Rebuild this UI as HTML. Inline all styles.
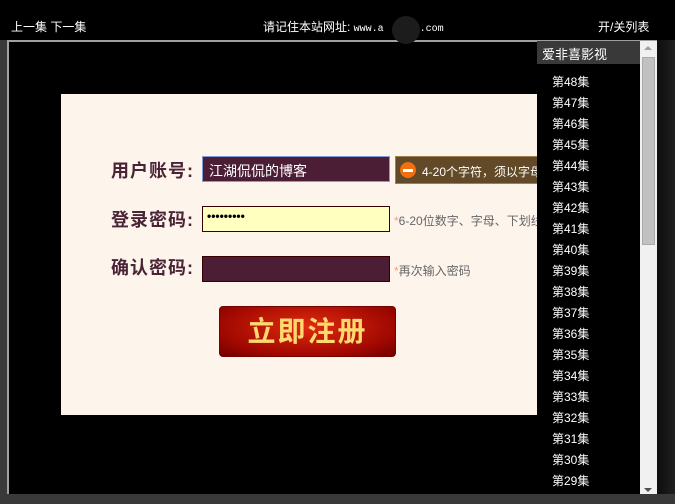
<!DOCTYPE html>
<html><head><meta charset="utf-8"><style>
*{margin:0;padding:0;box-sizing:border-box}
body{width:675px;height:504px;background:#393939;position:relative;overflow:hidden;font-family:"Liberation Sans","Noto Sans CJK SC",sans-serif;color:#fff}
.a{position:absolute}
.top{left:0;top:0;width:675px;height:40px;background:#000}
.rt{left:657px;top:40px;width:18px;height:454px;background:linear-gradient(90deg,#0e0e0e,#1f1f1f)}
.frame{left:7px;top:40px;width:650px;height:454px;border-left:2px solid #a0a0a0;border-top:2px solid #a0a0a0;background:#000}
.t{font-size:12px;top:18px;white-space:nowrap}
.panel{left:61px;top:94px;width:476px;height:321px;background:#fdf4ec}
.lab{font-size:18px;font-weight:bold;color:#4a2436;left:111px;letter-spacing:1px}
.inp{left:202px;width:188px;height:26px;background:#4c1e35;border:1px solid #3a0000}
.tip{font-size:12px;color:#666;left:394px}
.ep{left:552px;font-size:12px;color:#fff}
</style></head><body>
<div class="a top"></div>
<div class="a rt"></div>
<div class="a t" style="left:11px">上一集 下一集</div>
<div class="a t" style="left:263px">请记住本站网址: <span style="font-family:'Liberation Mono',monospace;font-size:10px">www.a&nbsp;&nbsp;&nbsp;&nbsp;&nbsp;i.com</span></div>
<div class="a" style="left:392px;top:16px;width:28px;height:28px;border-radius:50%;background:#1c1c1c;z-index:3"></div>
<div class="a t" style="left:598px">开/关列表</div>
<div class="a frame"></div>
<div class="a panel"></div>
<div class="a lab" style="top:157px">用户账号:</div>
<div class="a lab" style="top:206px">登录密码:</div>
<div class="a lab" style="top:254px">确认密码:</div>
<div class="a inp" style="top:156px;border-color:#7f9dd9;font-size:14px;padding:4px 6px;color:#fff">江湖侃侃的博客</div>
<div class="a inp" style="top:206px;background:#ffffc0;color:#000;font-size:12px;padding:2px 4px;font-weight:bold">•••••••••</div>
<div class="a inp" style="top:256px"></div>
<div class="a" style="left:395px;top:156px;width:142px;height:28px;background:#624a28;border:1px solid #a08050;border-right:none;font-size:12px;padding:6px 0 0 26px;white-space:nowrap;overflow:hidden">4-20个字符，须以字母</div>
<div class="a" style="left:400px;top:162px;width:16px;height:16px;border-radius:50%;background:#f07010"><div style="margin:7px 3px;width:10px;height:3px;background:#fff"></div></div>
<div class="a tip" style="top:212px;width:143px;overflow:hidden;white-space:nowrap"><span style="color:#f0a080">*</span>6-20位数字、字母、下划线</div>
<div class="a tip" style="top:262px"><span style="color:#f0a080">*</span>再次输入密码</div>
<div class="a" style="left:219px;top:306px;width:177px;height:51px;border-radius:4px;border:1px solid #700;background:radial-gradient(ellipse at 50% 40%,#e02a10,#a00800 70%,#700000);color:#ffd870;font-size:28px;font-weight:bold;text-align:center;line-height:49px;letter-spacing:2px">立即注册</div>
<div class="a" style="left:537px;top:41px;width:103px;height:23px;background:#393939;font-size:13px;padding:3px 0 0 5px">爱非喜影视</div>
<div class="a" style="left:640px;top:41px;width:17px;height:453px;background:#f1f1f1"></div>
<div class="a" style="left:642px;top:57px;width:13px;height:188px;background:#c1c1c1;border:1px solid #aaa"></div>
<div class="a" style="left:644px;top:46px;border:4px solid transparent;border-bottom:4px solid #a0a0a0;border-top:0"></div>
<div class="a" style="left:644px;top:488px;border:4px solid transparent;border-top:4px solid #505050;border-bottom:0"></div>
<div class="a ep" style="top:73px">第48集</div><div class="a ep" style="top:94px">第47集</div><div class="a ep" style="top:115px">第46集</div><div class="a ep" style="top:136px">第45集</div><div class="a ep" style="top:157px">第44集</div><div class="a ep" style="top:178px">第43集</div><div class="a ep" style="top:199px">第42集</div><div class="a ep" style="top:220px">第41集</div><div class="a ep" style="top:241px">第40集</div><div class="a ep" style="top:262px">第39集</div><div class="a ep" style="top:283px">第38集</div><div class="a ep" style="top:304px">第37集</div><div class="a ep" style="top:325px">第36集</div><div class="a ep" style="top:346px">第35集</div><div class="a ep" style="top:367px">第34集</div><div class="a ep" style="top:388px">第33集</div><div class="a ep" style="top:409px">第32集</div><div class="a ep" style="top:430px">第31集</div><div class="a ep" style="top:451px">第30集</div><div class="a ep" style="top:472px">第29集</div>
</body></html>
